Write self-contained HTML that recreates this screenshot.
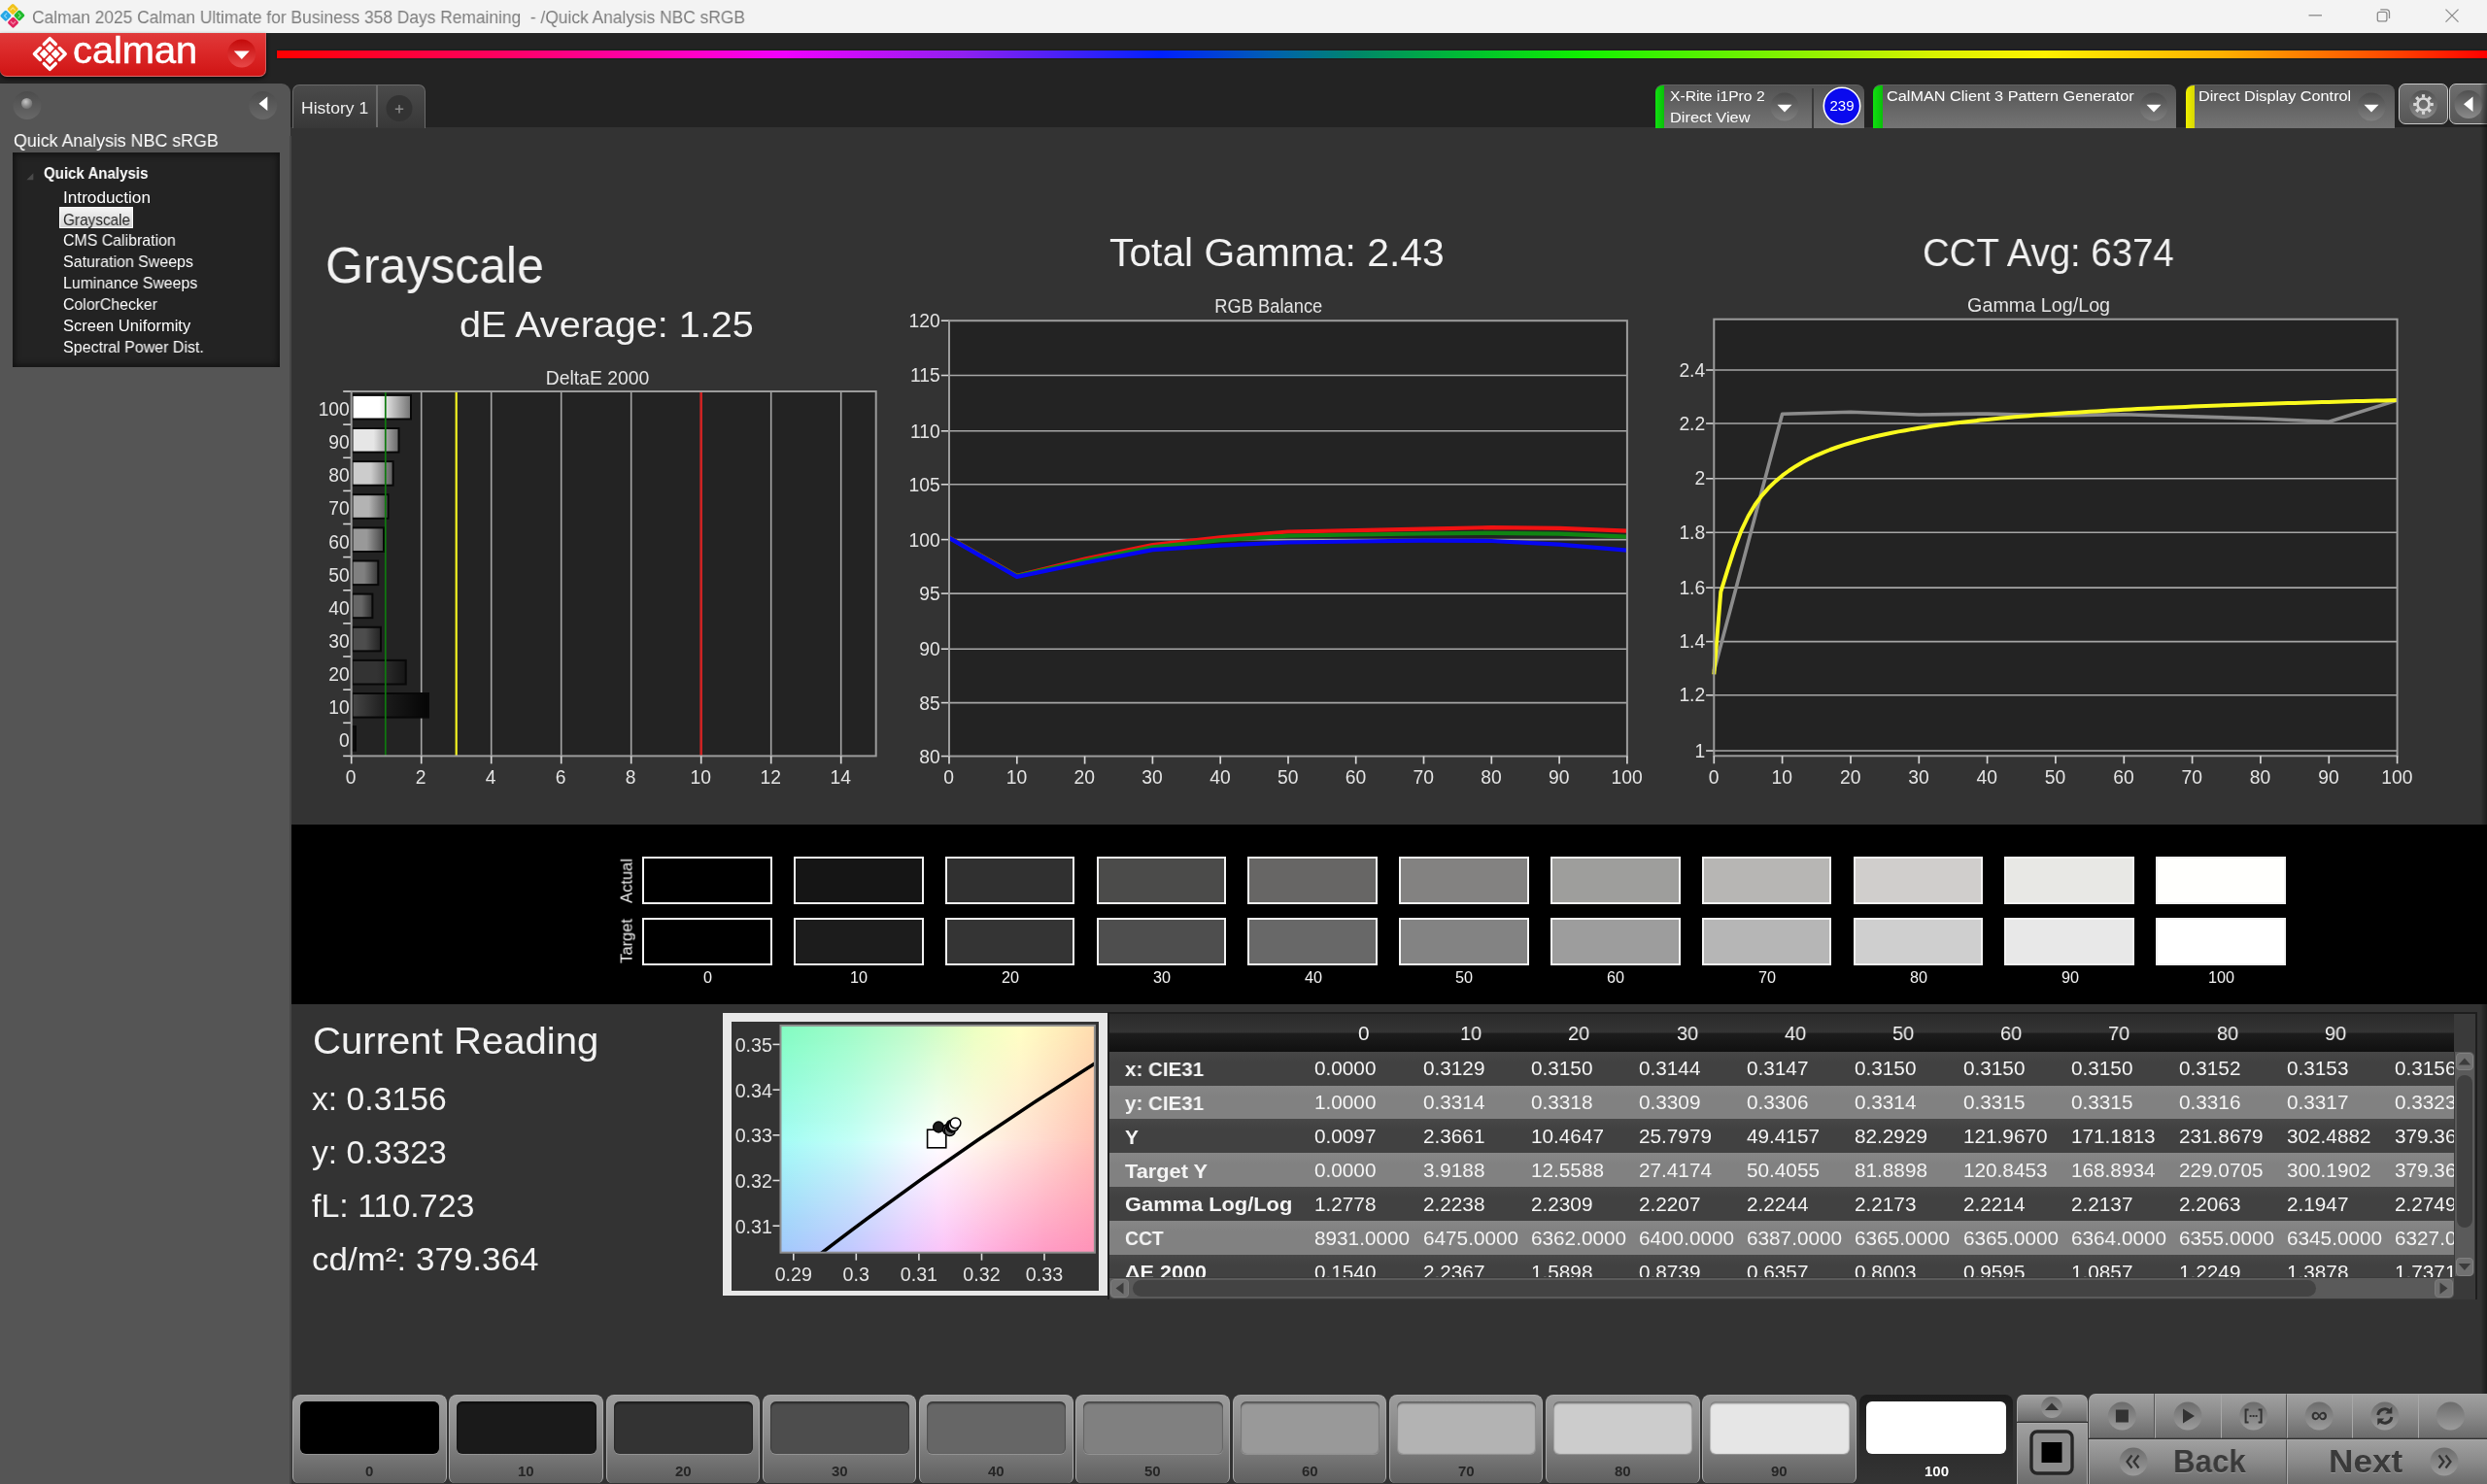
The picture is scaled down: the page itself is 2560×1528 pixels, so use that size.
<!DOCTYPE html>
<html><head><meta charset="utf-8"><title>Calman</title>
<style>
html,body{margin:0;padding:0;background:#232323;}
body{width:2560px;height:1528px;position:relative;overflow:hidden;font-family:"Liberation Sans",sans-serif;}
.t{position:absolute;white-space:nowrap;line-height:1;transform-origin:0 50%;will-change:transform;}
.b{position:absolute;box-sizing:border-box;}
svg{position:absolute;left:0;top:0;will-change:transform;}
svg text{font-family:"Liberation Sans",sans-serif;}
</style></head><body>
<div class="b" style="left:0.0px;top:0.0px;width:2560.0px;height:34.0px;background:#f3f3f3;"></div>
<div class="b" style="left:0.0px;top:34.0px;width:2560.0px;height:97.0px;background:#232323;"></div>
<div class="b" style="left:299.0px;top:131.0px;width:2261.0px;height:1397.0px;background:#333333;"></div>
<div class="b" style="left:285.0px;top:52.4px;width:2275.0px;height:8.0px;background:linear-gradient(90deg,#ff0000 0%,#ff0060 10%,#ff00c8 19%,#f000ff 23%,#9020f0 31%,#0020ff 40%,#0060b0 45%,#008868 49%,#00c030 54%,#10f000 59%,#80f000 68%,#d8f000 75%,#fff000 80%,#ffb000 88%,#ff5000 95%,#ff0000 100%);box-shadow:0 0 2px rgba(0,0,0,.6);"></div>
<svg width="34" height="34" viewBox="0 0 34 34"><g transform="translate(13.2,9.4)"><rect x="-4.3" y="-4.3" width="8.6" height="8.6" rx="1.7" transform="rotate(45)" fill="#f0c21a"/><path d="M-2.6 1.2 L0 -1.4 L2.6 1.2" fill="none" stroke="#fbe27a" stroke-width="1.1" transform="rotate(0)"/></g><g transform="translate(5.9,16.2)"><rect x="-4.3" y="-4.3" width="8.6" height="8.6" rx="1.7" transform="rotate(45)" fill="#27a8e6"/><path d="M-2.6 1.2 L0 -1.4 L2.6 1.2" fill="none" stroke="#8fd6f7" stroke-width="1.1" transform="rotate(-90)"/></g><g transform="translate(19.9,15.9)"><rect x="-4.3" y="-4.3" width="8.6" height="8.6" rx="1.7" transform="rotate(45)" fill="#1fb92c"/><path d="M-2.6 1.2 L0 -1.4 L2.6 1.2" fill="none" stroke="#86e38c" stroke-width="1.1" transform="rotate(90)"/></g><g transform="translate(13.5,23.2)"><rect x="-4.3" y="-4.3" width="8.6" height="8.6" rx="1.7" transform="rotate(45)" fill="#e0245e"/><path d="M-2.6 1.2 L0 -1.4 L2.6 1.2" fill="none" stroke="#f58aa8" stroke-width="1.1" transform="rotate(180)"/></g></svg>
<div class="t" style="left:33.2px;top:9.0px;font-size:18.0px;color:#7d7d7d;transform:scaleX(0.9654);">Calman 2025 Calman Ultimate for Business 358 Days Remaining&nbsp; - /Quick Analysis NBC sRGB</div>
<svg width="2560" height="34" viewBox="0 0 2560 34" style="left:0;top:0">
<g stroke="#8a8a8a" stroke-width="1.3" fill="none">
<line x1="2376.5" y1="15.8" x2="2390" y2="15.8"/>
<rect x="2447.3" y="12.3" width="9.6" height="9.6" rx="2"/>
<path d="M2450.3 9.8 h6 a3.2 3.2 0 0 1 3.2 3.2 v6"/>
<path d="M2517.5 9.6 l13 13 M2530.5 9.6 l-13 13"/>
</g></svg>
<div class="b" style="left:0.0px;top:34.0px;width:274.0px;height:45.0px;background:linear-gradient(#e03a3a 0%,#dc2a2a 40%,#d01414 100%);border-radius:0 0 7px 7px;border-bottom:1.5px solid #d86a6a;border-right:1px solid #d85c5c;box-shadow:0 2px 4px rgba(0,0,0,.7);"></div>
<svg width="274" height="45" viewBox="0 34 274 45" style="left:0;top:34px"><g transform="translate(51.3,55.5) rotate(45) scale(1.03)"><path d="M-10.9 -2.7 L-10.9 -10.9 L-2.7 -10.9" fill="none" stroke="#fff" stroke-width="3.4" stroke-linecap="round" stroke-linejoin="round"/><rect x="-7.35" y="-7.35" width="6.5" height="6.5" rx="0.8" fill="#fff"/><path d="M10.9 -2.7 L10.9 -10.9 L2.7 -10.9" fill="none" stroke="#fff" stroke-width="3.4" stroke-linecap="round" stroke-linejoin="round"/><rect x="0.85" y="-7.35" width="6.5" height="6.5" rx="0.8" fill="#fff"/><path d="M10.9 2.7 L10.9 10.9 L2.7 10.9" fill="none" stroke="#fff" stroke-width="3.4" stroke-linecap="round" stroke-linejoin="round"/><rect x="0.85" y="0.85" width="6.5" height="6.5" rx="0.8" fill="#fff"/><path d="M-10.9 2.7 L-10.9 10.9 L-2.7 10.9" fill="none" stroke="#fff" stroke-width="3.4" stroke-linecap="round" stroke-linejoin="round"/><rect x="-7.35" y="0.85" width="6.5" height="6.5" rx="0.8" fill="#fff"/></g><circle cx="248.8" cy="55" r="14.5" fill="url(#rg1)"/><path d="M240.8 52.5 h16 l-8 8.5z" fill="#fff"/><defs><linearGradient id="rg1" x1="0" y1="0" x2="0" y2="1"><stop offset="0" stop-color="#c40a0a"/><stop offset="1" stop-color="#e84848"/></linearGradient></defs></svg>
<div class="t" style="left:74.8px;top:33.2px;font-size:38.5px;color:#fff;transform:scaleX(1.0329);-webkit-text-stroke:0.5px #fff;">calman</div>
<div class="b" style="left:0.0px;top:86.3px;width:299.3px;height:1442.0px;background:#555555;border-radius:0 9px 0 0;"></div>
<svg width="300" height="50" viewBox="0 86 300 50" style="left:0;top:86px">
<defs><radialGradient id="led" cx="0.4" cy="0.35" r="0.7"><stop offset="0" stop-color="#c8c8c8"/><stop offset="0.6" stop-color="#8a8a8a"/><stop offset="1" stop-color="#6a6a6a"/></radialGradient>
<linearGradient id="dimp" x1="0" y1="0" x2="0" y2="1"><stop offset="0" stop-color="#4c4c4c"/><stop offset="1" stop-color="#686868"/></linearGradient></defs>
<circle cx="28" cy="108.5" r="14.5" fill="url(#dimp)"/>
<circle cx="27.6" cy="106.5" r="5.6" fill="url(#led)"/>
<circle cx="270.7" cy="108.5" r="14.5" fill="url(#dimp)"/>
<path d="M275.3 99.5 v14.5 l-8.8 -7.2z" fill="#fff"/>
</svg>
<div class="t" style="left:14.2px;top:135.6px;font-size:18.6px;color:#fff;transform:scaleX(0.9575);">Quick Analysis NBC sRGB</div>
<div class="b" style="left:13.0px;top:157.0px;width:274.5px;height:220.5px;background:#232323;box-shadow:inset 0 0 6px 2px #111;"></div>
<svg width="20" height="20" style="left:25px;top:172px"><path d="M9.3 6.2 v7 h-7z" fill="#4a4a4a"/></svg>
<div class="t" style="left:45.2px;top:170.9px;font-size:15.8px;color:#fff;font-weight:bold;transform:scaleX(0.9529);">Quick Analysis</div>
<div class="t" style="left:65.1px;top:195.1px;font-size:16.1px;color:#fff;transform:scaleX(1.0697);">Introduction</div>
<div class="b" style="left:61.2px;top:213.0px;width:76.2px;height:22.0px;background:linear-gradient(#f4f4f4,#d4d4d4);border:1px solid #fff;"></div>
<div class="t" style="left:65.1px;top:218.4px;font-size:16.1px;color:#222;transform:scaleX(0.9521);">Grayscale</div>
<div class="t" style="left:65.1px;top:239.2px;font-size:16.1px;color:#fff;transform:scaleX(0.9879);">CMS Calibration</div>
<div class="t" style="left:65.1px;top:261.2px;font-size:16.1px;color:#fff;transform:scaleX(0.9915);">Saturation Sweeps</div>
<div class="t" style="left:65.1px;top:283.3px;font-size:16.1px;color:#fff;transform:scaleX(0.9835);">Luminance Sweeps</div>
<div class="t" style="left:65.1px;top:305.3px;font-size:16.1px;color:#fff;transform:scaleX(0.9855);">ColorChecker</div>
<div class="t" style="left:65.1px;top:327.4px;font-size:16.1px;color:#fff;transform:scaleX(1.0254);">Screen Uniformity</div>
<div class="t" style="left:65.1px;top:349.4px;font-size:16.1px;color:#fff;transform:scaleX(0.9942);">Spectral Power Dist.</div>
<div class="b" style="left:300.6px;top:87.0px;width:137.0px;height:45.0px;background:linear-gradient(#4a4a4a,#383838);border:1.5px solid #6a6a6a;border-bottom:none;border-radius:7px 7px 0 0;"></div>
<div class="b" style="left:387.0px;top:88.0px;width:1.5px;height:43.0px;background:#6a6a6a;"></div>
<div class="t" style="left:309.6px;top:103.2px;font-size:17.4px;color:#f0f0f0;transform:scaleX(1.0080);">History 1</div>
<svg width="50" height="44" style="left:388px;top:87px"><circle cx="23" cy="24.5" r="13.5" fill="#333"/><path d="M18.8 25.3 h8.4 M23 21.1 v8.4" stroke="#8a8a8a" stroke-width="1.5"/></svg>
<div class="b" style="left:1704.2px;top:86.5px;width:214.5px;height:45.0px;background:linear-gradient(#525252,#686868 60%,#747474);border-radius:8px 8px 0 0;border-top:1px solid #626262;overflow:hidden;"><div style="position:absolute;left:0;top:-1px;width:9.3px;height:46px;background:linear-gradient(90deg,#10e010,#0ac00a)"></div></div>
<svg width="40" height="45" style="left:1817.0px;top:86.5px"><defs><linearGradient id="ag1704" x1="0" y1="0" x2="0" y2="1"><stop offset="0" stop-color="#4a4a4a"/><stop offset="1" stop-color="#808080"/></linearGradient></defs><circle cx="20" cy="23" r="14.5" fill="url(#ag1704)"/><path d="M12.5 20.8 h15 l-7.5 7.6z" fill="#fff"/></svg>
<div class="b" style="left:1865.0px;top:90.5px;width:1.6px;height:41.0px;background:#3a3a3a;"></div>
<div class="t" style="left:1718.5px;top:90.9px;font-size:15.4px;color:#fff;transform:scaleX(1.0192);">X-Rite i1Pro 2</div>
<div class="t" style="left:1719.2px;top:112.9px;font-size:15.4px;color:#fff;transform:scaleX(1.0632);">Direct View</div>
<svg width="44" height="44" style="left:1874.3px;top:87px"><circle cx="22" cy="22" r="18.7" fill="#0a0aee" stroke="#fff" stroke-width="1.6"/><text x="22" y="27.3" font-size="15" fill="#fff" text-anchor="middle">239</text></svg>
<div class="b" style="left:1928.4px;top:86.5px;width:312.0px;height:45.0px;background:linear-gradient(#525252,#686868 60%,#747474);border-radius:8px 8px 0 0;border-top:1px solid #626262;overflow:hidden;"><div style="position:absolute;left:0;top:-1px;width:9.3px;height:46px;background:linear-gradient(90deg,#10e010,#0ac00a)"></div></div>
<svg width="40" height="45" style="left:2196.5px;top:86.5px"><defs><linearGradient id="ag1928" x1="0" y1="0" x2="0" y2="1"><stop offset="0" stop-color="#4a4a4a"/><stop offset="1" stop-color="#808080"/></linearGradient></defs><circle cx="20" cy="23" r="14.5" fill="url(#ag1928)"/><path d="M12.5 20.8 h15 l-7.5 7.6z" fill="#fff"/></svg>
<div class="t" style="left:1942.1px;top:90.9px;font-size:15.4px;color:#fff;transform:scaleX(1.0560);">CalMAN Client 3 Pattern Generator</div>
<div class="b" style="left:2249.6px;top:86.5px;width:215.3px;height:45.0px;background:linear-gradient(#525252,#686868 60%,#747474);border-radius:8px 8px 0 0;border-top:1px solid #626262;overflow:hidden;"><div style="position:absolute;left:0;top:-1px;width:9.3px;height:46px;background:linear-gradient(90deg,#f0f000,#d8d800)"></div></div>
<svg width="40" height="45" style="left:2420.5px;top:86.5px"><defs><linearGradient id="ag2249" x1="0" y1="0" x2="0" y2="1"><stop offset="0" stop-color="#4a4a4a"/><stop offset="1" stop-color="#808080"/></linearGradient></defs><circle cx="20" cy="23" r="14.5" fill="url(#ag2249)"/><path d="M12.5 20.8 h15 l-7.5 7.6z" fill="#fff"/></svg>
<div class="t" style="left:2263.4px;top:90.9px;font-size:15.4px;color:#fff;transform:scaleX(1.0563);">Direct Display Control</div>
<div class="b" style="left:2468.9px;top:86.2px;width:51.5px;height:42.3px;background:linear-gradient(#6e6e6e,#565656);border:1.5px solid #c8c8c8;border-radius:7px;"></div>
<div class="b" style="left:2521.0px;top:86.2px;width:60.0px;height:42.3px;background:linear-gradient(#6e6e6e,#565656);border:1.5px solid #c8c8c8;border-radius:7px;"></div>
<svg width="100" height="44" style="left:2468px;top:86px"><defs><linearGradient id="gg" x1="0" y1="0" x2="0" y2="1"><stop offset="0" stop-color="#505050"/><stop offset="1" stop-color="#8a8a8a"/></linearGradient></defs><circle cx="26.5" cy="21.5" r="14.5" fill="url(#gg)"/><circle cx="73" cy="21.5" r="14.5" fill="url(#gg)"/><g transform="translate(26.5,21.5)" fill="none" stroke="#d8d8d8"><circle r="6" stroke-width="2.6"/><line x1="0" y1="-7" x2="0" y2="-10.3" stroke-width="3.2" transform="rotate(0)"/><line x1="0" y1="-7" x2="0" y2="-10.3" stroke-width="3.2" transform="rotate(45)"/><line x1="0" y1="-7" x2="0" y2="-10.3" stroke-width="3.2" transform="rotate(90)"/><line x1="0" y1="-7" x2="0" y2="-10.3" stroke-width="3.2" transform="rotate(135)"/><line x1="0" y1="-7" x2="0" y2="-10.3" stroke-width="3.2" transform="rotate(180)"/><line x1="0" y1="-7" x2="0" y2="-10.3" stroke-width="3.2" transform="rotate(225)"/><line x1="0" y1="-7" x2="0" y2="-10.3" stroke-width="3.2" transform="rotate(270)"/><line x1="0" y1="-7" x2="0" y2="-10.3" stroke-width="3.2" transform="rotate(315)"/></g><path d="M77.5 13.5 v15.5 l-9.5 -7.7z" fill="#fff"/></svg>
<div class="b" style="left:2553.0px;top:86.0px;width:7.0px;height:1350.0px;background:linear-gradient(90deg,rgba(0,0,0,0),rgba(0,0,0,.45));"></div>
<div class="t" style="left:334.5px;top:247.4px;font-size:52.0px;color:#f2f2f2;transform:scaleX(0.9604);">Grayscale</div>
<div class="t" style="left:472.5px;top:315.6px;font-size:37.6px;color:#f2f2f2;transform:scaleX(1.0528);">dE Average: 1.25</div>
<div class="t" style="left:1141.9px;top:240.2px;font-size:40.8px;color:#f2f2f2;">Total Gamma: 2.43</div>
<div class="t" style="left:1978.7px;top:240.1px;font-size:41.0px;color:#f2f2f2;transform:scaleX(0.9354);">CCT Avg: 6374</div>
<svg width="2560" height="840" viewBox="0 0 2560 840"><defs><linearGradient id="bg0" x1="0" y1="0" x2="1" y2="0"><stop offset="0" stop-color="rgb(30,30,30)"/><stop offset="0.46" stop-color="rgb(14,14,14)"/><stop offset="1" stop-color="rgb(5,5,5)"/></linearGradient><linearGradient id="bg1" x1="0" y1="0" x2="1" y2="0"><stop offset="0" stop-color="rgb(70,70,70)"/><stop offset="0.46" stop-color="rgb(26,26,26)"/><stop offset="1" stop-color="rgb(5,5,5)"/></linearGradient><linearGradient id="bg2" x1="0" y1="0" x2="1" y2="0"><stop offset="0" stop-color="rgb(51,51,51)"/><stop offset="0.46" stop-color="rgb(51,51,51)"/><stop offset="1" stop-color="rgb(22,22,22)"/></linearGradient><linearGradient id="bg3" x1="0" y1="0" x2="1" y2="0"><stop offset="0" stop-color="rgb(77,77,77)"/><stop offset="0.46" stop-color="rgb(77,77,77)"/><stop offset="1" stop-color="rgb(34,34,34)"/></linearGradient><linearGradient id="bg4" x1="0" y1="0" x2="1" y2="0"><stop offset="0" stop-color="rgb(102,102,102)"/><stop offset="0.46" stop-color="rgb(102,102,102)"/><stop offset="1" stop-color="rgb(45,45,45)"/></linearGradient><linearGradient id="bg5" x1="0" y1="0" x2="1" y2="0"><stop offset="0" stop-color="rgb(128,128,128)"/><stop offset="0.46" stop-color="rgb(128,128,128)"/><stop offset="1" stop-color="rgb(57,57,57)"/></linearGradient><linearGradient id="bg6" x1="0" y1="0" x2="1" y2="0"><stop offset="0" stop-color="rgb(153,153,153)"/><stop offset="0.46" stop-color="rgb(153,153,153)"/><stop offset="1" stop-color="rgb(68,68,68)"/></linearGradient><linearGradient id="bg7" x1="0" y1="0" x2="1" y2="0"><stop offset="0" stop-color="rgb(179,179,179)"/><stop offset="0.46" stop-color="rgb(179,179,179)"/><stop offset="1" stop-color="rgb(80,80,80)"/></linearGradient><linearGradient id="bg8" x1="0" y1="0" x2="1" y2="0"><stop offset="0" stop-color="rgb(204,204,204)"/><stop offset="0.46" stop-color="rgb(204,204,204)"/><stop offset="1" stop-color="rgb(91,91,91)"/></linearGradient><linearGradient id="bg9" x1="0" y1="0" x2="1" y2="0"><stop offset="0" stop-color="rgb(230,230,230)"/><stop offset="0.46" stop-color="rgb(230,230,230)"/><stop offset="1" stop-color="rgb(103,103,103)"/></linearGradient><linearGradient id="bg10" x1="0" y1="0" x2="1" y2="0"><stop offset="0" stop-color="rgb(255,255,255)"/><stop offset="0.46" stop-color="rgb(255,255,255)"/><stop offset="1" stop-color="rgb(114,114,114)"/></linearGradient></defs><rect x="361.7" y="403.0" width="540.0" height="375.4" fill="#232323"/><line x1="433.7" y1="403.0" x2="433.7" y2="778.4" stroke="#a6a6a6" stroke-width="1.6"/><line x1="505.7" y1="403.0" x2="505.7" y2="778.4" stroke="#a6a6a6" stroke-width="1.6"/><line x1="577.7" y1="403.0" x2="577.7" y2="778.4" stroke="#a6a6a6" stroke-width="1.6"/><line x1="649.7" y1="403.0" x2="649.7" y2="778.4" stroke="#a6a6a6" stroke-width="1.6"/><line x1="721.7" y1="403.0" x2="721.7" y2="778.4" stroke="#a6a6a6" stroke-width="1.6"/><line x1="793.7" y1="403.0" x2="793.7" y2="778.4" stroke="#a6a6a6" stroke-width="1.6"/><line x1="865.7" y1="403.0" x2="865.7" y2="778.4" stroke="#a6a6a6" stroke-width="1.6"/><rect x="362.5" y="748.1" width="3.5" height="24.6" fill="url(#bg0)" stroke="#080808" stroke-width="2"/><text x="359.8" y="769.3" font-size="19.3" fill="#e4e4e4" text-anchor="end" >0</text><rect x="362.5" y="714.0" width="78.5" height="24.6" fill="url(#bg1)" stroke="#080808" stroke-width="2"/><text x="359.8" y="735.2" font-size="19.3" fill="#e4e4e4" text-anchor="end" >10</text><rect x="362.5" y="679.9" width="55.2" height="24.6" fill="url(#bg2)" stroke="#080808" stroke-width="2"/><text x="359.8" y="701.1" font-size="19.3" fill="#e4e4e4" text-anchor="end" >20</text><rect x="362.5" y="645.8" width="29.5" height="24.6" fill="url(#bg3)" stroke="#080808" stroke-width="2"/><text x="359.8" y="667.0" font-size="19.3" fill="#e4e4e4" text-anchor="end" >30</text><rect x="362.5" y="611.6" width="20.9" height="24.6" fill="url(#bg4)" stroke="#080808" stroke-width="2"/><text x="359.8" y="632.8" font-size="19.3" fill="#e4e4e4" text-anchor="end" >40</text><rect x="362.5" y="577.5" width="26.8" height="24.6" fill="url(#bg5)" stroke="#080808" stroke-width="2"/><text x="359.8" y="598.7" font-size="19.3" fill="#e4e4e4" text-anchor="end" >50</text><rect x="362.5" y="543.4" width="32.5" height="24.6" fill="url(#bg6)" stroke="#080808" stroke-width="2"/><text x="359.8" y="564.6" font-size="19.3" fill="#e4e4e4" text-anchor="end" >60</text><rect x="362.5" y="509.2" width="37.1" height="24.6" fill="url(#bg7)" stroke="#080808" stroke-width="2"/><text x="359.8" y="530.4" font-size="19.3" fill="#e4e4e4" text-anchor="end" >70</text><rect x="362.5" y="475.1" width="42.1" height="24.6" fill="url(#bg8)" stroke="#080808" stroke-width="2"/><text x="359.8" y="496.3" font-size="19.3" fill="#e4e4e4" text-anchor="end" >80</text><rect x="362.5" y="441.0" width="48.0" height="24.6" fill="url(#bg9)" stroke="#080808" stroke-width="2"/><text x="359.8" y="462.2" font-size="19.3" fill="#e4e4e4" text-anchor="end" >90</text><rect x="362.5" y="406.9" width="60.5" height="24.6" fill="url(#bg10)" stroke="#080808" stroke-width="2"/><text x="359.8" y="428.1" font-size="19.3" fill="#e4e4e4" text-anchor="end" >100</text><line x1="353.2" y1="403.0" x2="361.7" y2="403.0" stroke="#d6d6d6" stroke-width="1.6"/><line x1="353.2" y1="437.1" x2="361.7" y2="437.1" stroke="#d6d6d6" stroke-width="1.6"/><line x1="353.2" y1="471.3" x2="361.7" y2="471.3" stroke="#d6d6d6" stroke-width="1.6"/><line x1="353.2" y1="505.4" x2="361.7" y2="505.4" stroke="#d6d6d6" stroke-width="1.6"/><line x1="353.2" y1="539.5" x2="361.7" y2="539.5" stroke="#d6d6d6" stroke-width="1.6"/><line x1="353.2" y1="573.6" x2="361.7" y2="573.6" stroke="#d6d6d6" stroke-width="1.6"/><line x1="353.2" y1="607.8" x2="361.7" y2="607.8" stroke="#d6d6d6" stroke-width="1.6"/><line x1="353.2" y1="641.9" x2="361.7" y2="641.9" stroke="#d6d6d6" stroke-width="1.6"/><line x1="353.2" y1="676.0" x2="361.7" y2="676.0" stroke="#d6d6d6" stroke-width="1.6"/><line x1="353.2" y1="710.1" x2="361.7" y2="710.1" stroke="#d6d6d6" stroke-width="1.6"/><line x1="353.2" y1="744.3" x2="361.7" y2="744.3" stroke="#d6d6d6" stroke-width="1.6"/><line x1="353.2" y1="778.4" x2="361.7" y2="778.4" stroke="#d6d6d6" stroke-width="1.6"/><line x1="396.8" y1="403.0" x2="396.8" y2="778.4" stroke="#0e7a0e" stroke-width="1.7"/><line x1="469.7" y1="403.0" x2="469.7" y2="778.4" stroke="#f4f420" stroke-width="2.2"/><line x1="721.7" y1="403.0" x2="721.7" y2="778.4" stroke="#cc2222" stroke-width="2.6"/><rect x="361.7" y="403.0" width="540.0" height="375.4" fill="none" stroke="#9c9c9c" stroke-width="2"/><line x1="361.7" y1="778.4" x2="361.7" y2="786.4" stroke="#d6d6d6" stroke-width="1.7"/><text x="361.2" y="806.6" font-size="19.3" fill="#e4e4e4" text-anchor="middle" >0</text><line x1="433.7" y1="778.4" x2="433.7" y2="786.4" stroke="#d6d6d6" stroke-width="1.7"/><text x="433.2" y="806.6" font-size="19.3" fill="#e4e4e4" text-anchor="middle" >2</text><line x1="505.7" y1="778.4" x2="505.7" y2="786.4" stroke="#d6d6d6" stroke-width="1.7"/><text x="505.2" y="806.6" font-size="19.3" fill="#e4e4e4" text-anchor="middle" >4</text><line x1="577.7" y1="778.4" x2="577.7" y2="786.4" stroke="#d6d6d6" stroke-width="1.7"/><text x="577.2" y="806.6" font-size="19.3" fill="#e4e4e4" text-anchor="middle" >6</text><line x1="649.7" y1="778.4" x2="649.7" y2="786.4" stroke="#d6d6d6" stroke-width="1.7"/><text x="649.2" y="806.6" font-size="19.3" fill="#e4e4e4" text-anchor="middle" >8</text><line x1="721.7" y1="778.4" x2="721.7" y2="786.4" stroke="#d6d6d6" stroke-width="1.7"/><text x="721.2" y="806.6" font-size="19.3" fill="#e4e4e4" text-anchor="middle" >10</text><line x1="793.7" y1="778.4" x2="793.7" y2="786.4" stroke="#d6d6d6" stroke-width="1.7"/><text x="793.2" y="806.6" font-size="19.3" fill="#e4e4e4" text-anchor="middle" >12</text><line x1="865.7" y1="778.4" x2="865.7" y2="786.4" stroke="#d6d6d6" stroke-width="1.7"/><text x="865.2" y="806.6" font-size="19.3" fill="#e4e4e4" text-anchor="middle" >14</text><text x="615.1" y="395.6" font-size="19.3" fill="#e4e4e4" text-anchor="middle" textLength="106.6" lengthAdjust="spacingAndGlyphs">DeltaE 2000</text><rect x="977.0" y="330.2" width="697.9000000000001" height="448.40000000000003" fill="#232323"/><line x1="968.8" y1="778.6" x2="977.0" y2="778.6" stroke="#d6d6d6" stroke-width="1.6"/><text x="967.7" y="785.5" font-size="19.3" fill="#e4e4e4" text-anchor="end" >80</text><line x1="977.0" y1="723.6" x2="1674.9" y2="723.6" stroke="#a6a6a6" stroke-width="1.6"/><line x1="968.8" y1="723.6" x2="977.0" y2="723.6" stroke="#d6d6d6" stroke-width="1.6"/><text x="967.7" y="730.5" font-size="19.3" fill="#e4e4e4" text-anchor="end" >85</text><line x1="977.0" y1="668.2" x2="1674.9" y2="668.2" stroke="#a6a6a6" stroke-width="1.6"/><line x1="968.8" y1="668.2" x2="977.0" y2="668.2" stroke="#d6d6d6" stroke-width="1.6"/><text x="967.7" y="675.1" font-size="19.3" fill="#e4e4e4" text-anchor="end" >90</text><line x1="977.0" y1="611.1" x2="1674.9" y2="611.1" stroke="#a6a6a6" stroke-width="1.6"/><line x1="968.8" y1="611.1" x2="977.0" y2="611.1" stroke="#d6d6d6" stroke-width="1.6"/><text x="967.7" y="618.0" font-size="19.3" fill="#e4e4e4" text-anchor="end" >95</text><line x1="977.0" y1="555.6" x2="1674.9" y2="555.6" stroke="#a6a6a6" stroke-width="1.6"/><line x1="968.8" y1="555.6" x2="977.0" y2="555.6" stroke="#d6d6d6" stroke-width="1.6"/><text x="967.7" y="562.5" font-size="19.3" fill="#e4e4e4" text-anchor="end" >100</text><line x1="977.0" y1="498.8" x2="1674.9" y2="498.8" stroke="#a6a6a6" stroke-width="1.6"/><line x1="968.8" y1="498.8" x2="977.0" y2="498.8" stroke="#d6d6d6" stroke-width="1.6"/><text x="967.7" y="505.7" font-size="19.3" fill="#e4e4e4" text-anchor="end" >105</text><line x1="977.0" y1="443.8" x2="1674.9" y2="443.8" stroke="#a6a6a6" stroke-width="1.6"/><line x1="968.8" y1="443.8" x2="977.0" y2="443.8" stroke="#d6d6d6" stroke-width="1.6"/><text x="967.7" y="450.7" font-size="19.3" fill="#e4e4e4" text-anchor="end" >110</text><line x1="977.0" y1="386.5" x2="1674.9" y2="386.5" stroke="#a6a6a6" stroke-width="1.6"/><line x1="968.8" y1="386.5" x2="977.0" y2="386.5" stroke="#d6d6d6" stroke-width="1.6"/><text x="967.7" y="393.4" font-size="19.3" fill="#e4e4e4" text-anchor="end" >115</text><line x1="968.8" y1="330.2" x2="977.0" y2="330.2" stroke="#d6d6d6" stroke-width="1.6"/><text x="967.7" y="337.1" font-size="19.3" fill="#e4e4e4" text-anchor="end" >120</text><polyline points="977.0,553.3 1046.8,592.8 1116.6,575.6 1186.4,561.1 1256.2,553.3 1326.0,547.5 1395.7,546.1 1465.5,544.6 1535.3,543.1 1605.1,543.9 1674.9,546.7" fill="none" stroke="#f01212" stroke-width="4.2" stroke-linejoin="round"/><polyline points="977.0,553.6 1046.8,593.1 1116.6,577.2 1186.4,563.4 1256.2,556.2 1326.0,551.6 1395.7,550.5 1465.5,549.5 1535.3,548.8 1605.1,549.7 1674.9,552.6" fill="none" stroke="#108412" stroke-width="4.2" stroke-linejoin="round"/><polyline points="977.0,553.9 1046.8,593.9 1116.6,579.5 1186.4,566.1 1256.2,561.7 1326.0,558.5 1395.7,557.5 1465.5,556.7 1535.3,557.0 1605.1,560.6 1674.9,566.7" fill="none" stroke="#0606f2" stroke-width="4.2" stroke-linejoin="round"/><rect x="977.0" y="330.2" width="697.9000000000001" height="448.40000000000003" fill="none" stroke="#9c9c9c" stroke-width="2"/><line x1="977.0" y1="778.6" x2="977.0" y2="786.6" stroke="#d6d6d6" stroke-width="1.7"/><text x="976.7" y="807.0" font-size="19.3" fill="#e4e4e4" text-anchor="middle" >0</text><line x1="1046.8" y1="778.6" x2="1046.8" y2="786.6" stroke="#d6d6d6" stroke-width="1.7"/><text x="1046.5" y="807.0" font-size="19.3" fill="#e4e4e4" text-anchor="middle" >10</text><line x1="1116.6" y1="778.6" x2="1116.6" y2="786.6" stroke="#d6d6d6" stroke-width="1.7"/><text x="1116.3" y="807.0" font-size="19.3" fill="#e4e4e4" text-anchor="middle" >20</text><line x1="1186.4" y1="778.6" x2="1186.4" y2="786.6" stroke="#d6d6d6" stroke-width="1.7"/><text x="1186.1" y="807.0" font-size="19.3" fill="#e4e4e4" text-anchor="middle" >30</text><line x1="1256.2" y1="778.6" x2="1256.2" y2="786.6" stroke="#d6d6d6" stroke-width="1.7"/><text x="1255.9" y="807.0" font-size="19.3" fill="#e4e4e4" text-anchor="middle" >40</text><line x1="1326.0" y1="778.6" x2="1326.0" y2="786.6" stroke="#d6d6d6" stroke-width="1.7"/><text x="1325.7" y="807.0" font-size="19.3" fill="#e4e4e4" text-anchor="middle" >50</text><line x1="1395.7" y1="778.6" x2="1395.7" y2="786.6" stroke="#d6d6d6" stroke-width="1.7"/><text x="1395.4" y="807.0" font-size="19.3" fill="#e4e4e4" text-anchor="middle" >60</text><line x1="1465.5" y1="778.6" x2="1465.5" y2="786.6" stroke="#d6d6d6" stroke-width="1.7"/><text x="1465.2" y="807.0" font-size="19.3" fill="#e4e4e4" text-anchor="middle" >70</text><line x1="1535.3" y1="778.6" x2="1535.3" y2="786.6" stroke="#d6d6d6" stroke-width="1.7"/><text x="1535.0" y="807.0" font-size="19.3" fill="#e4e4e4" text-anchor="middle" >80</text><line x1="1605.1" y1="778.6" x2="1605.1" y2="786.6" stroke="#d6d6d6" stroke-width="1.7"/><text x="1604.8" y="807.0" font-size="19.3" fill="#e4e4e4" text-anchor="middle" >90</text><line x1="1674.9" y1="778.6" x2="1674.9" y2="786.6" stroke="#d6d6d6" stroke-width="1.7"/><text x="1674.6" y="807.0" font-size="19.3" fill="#e4e4e4" text-anchor="middle" >100</text><text x="1305.8" y="321.9" font-size="19.3" fill="#e4e4e4" text-anchor="middle" textLength="111" lengthAdjust="spacingAndGlyphs">RGB Balance</text><rect x="1764.3" y="328.7" width="703.3" height="449.59999999999997" fill="#232323"/><line x1="1764.3" y1="773.0" x2="2467.6" y2="773.0" stroke="#a6a6a6" stroke-width="1.6"/><line x1="1756.1" y1="773.0" x2="1764.3" y2="773.0" stroke="#d6d6d6" stroke-width="1.6"/><text x="1755.2" y="779.6" font-size="19.3" fill="#e4e4e4" text-anchor="end" >1</text><line x1="1764.3" y1="715.8" x2="2467.6" y2="715.8" stroke="#a6a6a6" stroke-width="1.6"/><line x1="1756.1" y1="715.8" x2="1764.3" y2="715.8" stroke="#d6d6d6" stroke-width="1.6"/><text x="1755.2" y="722.4" font-size="19.3" fill="#e4e4e4" text-anchor="end" >1.2</text><line x1="1764.3" y1="660.6" x2="2467.6" y2="660.6" stroke="#a6a6a6" stroke-width="1.6"/><line x1="1756.1" y1="660.6" x2="1764.3" y2="660.6" stroke="#d6d6d6" stroke-width="1.6"/><text x="1755.2" y="667.2" font-size="19.3" fill="#e4e4e4" text-anchor="end" >1.4</text><line x1="1764.3" y1="605.1" x2="2467.6" y2="605.1" stroke="#a6a6a6" stroke-width="1.6"/><line x1="1756.1" y1="605.1" x2="1764.3" y2="605.1" stroke="#d6d6d6" stroke-width="1.6"/><text x="1755.2" y="611.7" font-size="19.3" fill="#e4e4e4" text-anchor="end" >1.6</text><line x1="1764.3" y1="548.3" x2="2467.6" y2="548.3" stroke="#a6a6a6" stroke-width="1.6"/><line x1="1756.1" y1="548.3" x2="1764.3" y2="548.3" stroke="#d6d6d6" stroke-width="1.6"/><text x="1755.2" y="554.9" font-size="19.3" fill="#e4e4e4" text-anchor="end" >1.8</text><line x1="1764.3" y1="492.8" x2="2467.6" y2="492.8" stroke="#a6a6a6" stroke-width="1.6"/><line x1="1756.1" y1="492.8" x2="1764.3" y2="492.8" stroke="#d6d6d6" stroke-width="1.6"/><text x="1755.2" y="499.4" font-size="19.3" fill="#e4e4e4" text-anchor="end" >2</text><line x1="1764.3" y1="436.0" x2="2467.6" y2="436.0" stroke="#a6a6a6" stroke-width="1.6"/><line x1="1756.1" y1="436.0" x2="1764.3" y2="436.0" stroke="#d6d6d6" stroke-width="1.6"/><text x="1755.2" y="442.6" font-size="19.3" fill="#e4e4e4" text-anchor="end" >2.2</text><line x1="1764.3" y1="381.0" x2="2467.6" y2="381.0" stroke="#a6a6a6" stroke-width="1.6"/><line x1="1756.1" y1="381.0" x2="1764.3" y2="381.0" stroke="#d6d6d6" stroke-width="1.6"/><text x="1755.2" y="387.6" font-size="19.3" fill="#e4e4e4" text-anchor="end" >2.4</text><polyline points="1764.3,691.0 1834.6,426.2 1905.0,424.2 1975.3,427.0 2045.6,426.0 2115.9,427.9 2186.3,426.8 2256.6,428.9 2326.9,431.0 2397.3,434.2 2467.6,412.1" fill="none" stroke="#8c8c8c" stroke-width="3.6" stroke-linejoin="round"/><polyline points="1764.3,694.3 1771.3,609.3 1778.4,586.3 1785.4,564.9 1792.4,546.4 1799.5,531.5 1806.5,519.8 1813.5,510.3 1820.6,502.3 1827.6,495.6 1834.6,489.7 1841.7,484.5 1848.7,479.9 1855.7,475.8 1862.8,472.1 1869.8,468.8 1876.8,465.8 1883.9,463.0 1890.9,460.5 1897.9,458.2 1905.0,456.0 1912.0,454.0 1919.0,452.1 1926.1,450.4 1933.1,448.8 1940.1,447.2 1947.2,445.8 1954.2,444.4 1961.2,443.2 1968.3,441.9 1975.3,440.8 1982.3,439.7 1989.4,438.6 1996.4,437.6 2003.4,436.7 2010.5,435.8 2017.5,435.0 2024.5,434.2 2031.6,433.4 2038.6,432.6 2045.6,431.9 2052.7,431.2 2059.7,430.6 2066.7,430.0 2073.8,429.3 2080.8,428.8 2087.8,428.2 2094.9,427.6 2101.9,427.1 2108.9,426.6 2115.9,426.1 2123.0,425.6 2130.0,425.1 2137.0,424.7 2144.1,424.2 2151.1,423.8 2158.1,423.4 2165.2,423.0 2172.2,422.6 2179.2,422.2 2186.3,421.8 2193.3,421.5 2200.3,421.1 2207.4,420.8 2214.4,420.4 2221.4,420.1 2228.5,419.8 2235.5,419.5 2242.5,419.2 2249.6,418.9 2256.6,418.6 2263.6,418.3 2270.7,418.0 2277.7,417.8 2284.7,417.5 2291.8,417.2 2298.8,417.0 2305.8,416.7 2312.9,416.5 2319.9,416.2 2326.9,416.0 2334.0,415.8 2341.0,415.5 2348.0,415.3 2355.1,415.1 2362.1,414.9 2369.1,414.7 2376.2,414.5 2383.2,414.3 2390.2,414.1 2397.3,413.9 2404.3,413.7 2411.3,413.5 2418.4,413.3 2425.4,413.1 2432.4,413.0 2439.5,412.8 2446.5,412.6 2453.5,412.4 2460.6,412.3 2467.6,412.1" fill="none" stroke="#fafa1e" stroke-width="4" stroke-linejoin="round"/><rect x="1764.3" y="328.7" width="703.3" height="449.59999999999997" fill="none" stroke="#9c9c9c" stroke-width="2"/><line x1="1764.3" y1="778.3" x2="1764.3" y2="786.3" stroke="#d6d6d6" stroke-width="1.7"/><text x="1764.0" y="807.0" font-size="19.3" fill="#e4e4e4" text-anchor="middle" >0</text><line x1="1834.6" y1="778.3" x2="1834.6" y2="786.3" stroke="#d6d6d6" stroke-width="1.7"/><text x="1834.3" y="807.0" font-size="19.3" fill="#e4e4e4" text-anchor="middle" >10</text><line x1="1905.0" y1="778.3" x2="1905.0" y2="786.3" stroke="#d6d6d6" stroke-width="1.7"/><text x="1904.7" y="807.0" font-size="19.3" fill="#e4e4e4" text-anchor="middle" >20</text><line x1="1975.3" y1="778.3" x2="1975.3" y2="786.3" stroke="#d6d6d6" stroke-width="1.7"/><text x="1975.0" y="807.0" font-size="19.3" fill="#e4e4e4" text-anchor="middle" >30</text><line x1="2045.6" y1="778.3" x2="2045.6" y2="786.3" stroke="#d6d6d6" stroke-width="1.7"/><text x="2045.3" y="807.0" font-size="19.3" fill="#e4e4e4" text-anchor="middle" >40</text><line x1="2115.9" y1="778.3" x2="2115.9" y2="786.3" stroke="#d6d6d6" stroke-width="1.7"/><text x="2115.6" y="807.0" font-size="19.3" fill="#e4e4e4" text-anchor="middle" >50</text><line x1="2186.3" y1="778.3" x2="2186.3" y2="786.3" stroke="#d6d6d6" stroke-width="1.7"/><text x="2186.0" y="807.0" font-size="19.3" fill="#e4e4e4" text-anchor="middle" >60</text><line x1="2256.6" y1="778.3" x2="2256.6" y2="786.3" stroke="#d6d6d6" stroke-width="1.7"/><text x="2256.3" y="807.0" font-size="19.3" fill="#e4e4e4" text-anchor="middle" >70</text><line x1="2326.9" y1="778.3" x2="2326.9" y2="786.3" stroke="#d6d6d6" stroke-width="1.7"/><text x="2326.6" y="807.0" font-size="19.3" fill="#e4e4e4" text-anchor="middle" >80</text><line x1="2397.3" y1="778.3" x2="2397.3" y2="786.3" stroke="#d6d6d6" stroke-width="1.7"/><text x="2397.0" y="807.0" font-size="19.3" fill="#e4e4e4" text-anchor="middle" >90</text><line x1="2467.6" y1="778.3" x2="2467.6" y2="786.3" stroke="#d6d6d6" stroke-width="1.7"/><text x="2467.3" y="807.0" font-size="19.3" fill="#e4e4e4" text-anchor="middle" >100</text><text x="2098.6" y="321.3" font-size="19.3" fill="#e4e4e4" text-anchor="middle" textLength="147" lengthAdjust="spacingAndGlyphs">Gamma Log/Log</text></svg>
<div class="b" style="left:299.0px;top:848.5px;width:2261.0px;height:185.0px;background:#000;"></div>
<div class="b" style="left:661.2px;top:882.2px;width:133.6px;height:49.0px;background:#000000;border:2px solid #f4f4f4;"></div>
<div class="b" style="left:661.2px;top:944.8px;width:133.6px;height:48.8px;background:#000000;border:2px solid #f4f4f4;"></div>
<div class="t" style="left:723.9px;top:998.2px;font-size:16.2px;color:#f4f4f4;">0</div>
<div class="b" style="left:817.0px;top:882.2px;width:133.6px;height:49.0px;background:#151515;border:2px solid #f4f4f4;"></div>
<div class="b" style="left:817.0px;top:944.8px;width:133.6px;height:48.8px;background:#1c1c1c;border:2px solid #f4f4f4;"></div>
<div class="t" style="left:875.2px;top:998.2px;font-size:16.2px;color:#f4f4f4;">10</div>
<div class="b" style="left:972.8px;top:882.2px;width:133.6px;height:49.0px;background:#303030;border:2px solid #f4f4f4;"></div>
<div class="b" style="left:972.8px;top:944.8px;width:133.6px;height:48.8px;background:#343434;border:2px solid #f4f4f4;"></div>
<div class="t" style="left:1031.0px;top:998.2px;font-size:16.2px;color:#f4f4f4;">20</div>
<div class="b" style="left:1128.6px;top:882.2px;width:133.6px;height:49.0px;background:#4b4b4a;border:2px solid #f4f4f4;"></div>
<div class="b" style="left:1128.6px;top:944.8px;width:133.6px;height:48.8px;background:#4e4e4e;border:2px solid #f4f4f4;"></div>
<div class="t" style="left:1186.8px;top:998.2px;font-size:16.2px;color:#f4f4f4;">30</div>
<div class="b" style="left:1284.4px;top:882.2px;width:133.6px;height:49.0px;background:#676665;border:2px solid #f4f4f4;"></div>
<div class="b" style="left:1284.4px;top:944.8px;width:133.6px;height:48.8px;background:#686868;border:2px solid #f4f4f4;"></div>
<div class="t" style="left:1342.6px;top:998.2px;font-size:16.2px;color:#f4f4f4;">40</div>
<div class="b" style="left:1440.2px;top:882.2px;width:133.6px;height:49.0px;background:#838281;border:2px solid #f4f4f4;"></div>
<div class="b" style="left:1440.2px;top:944.8px;width:133.6px;height:48.8px;background:#838383;border:2px solid #f4f4f4;"></div>
<div class="t" style="left:1498.4px;top:998.2px;font-size:16.2px;color:#f4f4f4;">50</div>
<div class="b" style="left:1596.0px;top:882.2px;width:133.6px;height:49.0px;background:#9e9e9c;border:2px solid #f4f4f4;"></div>
<div class="b" style="left:1596.0px;top:944.8px;width:133.6px;height:48.8px;background:#9d9d9d;border:2px solid #f4f4f4;"></div>
<div class="t" style="left:1654.2px;top:998.2px;font-size:16.2px;color:#f4f4f4;">60</div>
<div class="b" style="left:1751.8px;top:882.2px;width:133.6px;height:49.0px;background:#b7b6b4;border:2px solid #f4f4f4;"></div>
<div class="b" style="left:1751.8px;top:944.8px;width:133.6px;height:48.8px;background:#b6b6b6;border:2px solid #f4f4f4;"></div>
<div class="t" style="left:1810.0px;top:998.2px;font-size:16.2px;color:#f4f4f4;">70</div>
<div class="b" style="left:1907.6px;top:882.2px;width:133.6px;height:49.0px;background:#d0cecc;border:2px solid #f4f4f4;"></div>
<div class="b" style="left:1907.6px;top:944.8px;width:133.6px;height:48.8px;background:#cfcfcf;border:2px solid #f4f4f4;"></div>
<div class="t" style="left:1965.8px;top:998.2px;font-size:16.2px;color:#f4f4f4;">80</div>
<div class="b" style="left:2063.4px;top:882.2px;width:133.6px;height:49.0px;background:#e8e8e5;border:2px solid #f4f4f4;"></div>
<div class="b" style="left:2063.4px;top:944.8px;width:133.6px;height:48.8px;background:#e8e8e8;border:2px solid #f4f4f4;"></div>
<div class="t" style="left:2121.6px;top:998.2px;font-size:16.2px;color:#f4f4f4;">90</div>
<div class="b" style="left:2219.2px;top:882.2px;width:133.6px;height:49.0px;background:#fffffd;border:2px solid #f4f4f4;"></div>
<div class="b" style="left:2219.2px;top:944.8px;width:133.6px;height:48.8px;background:#ffffff;border:2px solid #f4f4f4;"></div>
<div class="t" style="left:2272.9px;top:998.2px;font-size:16.2px;color:#f4f4f4;">100</div>
<div class="t" style="left:645.9px;top:907.0px;font-size:16.8px;color:#f0f0f0;transform:translate(-50%,-50%) rotate(-90deg) scaleX(0.983);transform-origin:50% 50%;">Actual</div>
<div class="t" style="left:645.9px;top:968.8px;font-size:16.8px;color:#f0f0f0;transform:translate(-50%,-50%) rotate(-90deg) scaleX(0.983);transform-origin:50% 50%;">Target</div>
<div class="t" style="left:321.6px;top:1053.1px;font-size:38.6px;color:#f2f2f2;transform:scaleX(1.0401);">Current Reading</div>
<div class="t" style="left:320.6px;top:1114.8px;font-size:33.2px;color:#f2f2f2;transform:scaleX(1.0161);">x: 0.3156</div>
<div class="t" style="left:320.6px;top:1169.9px;font-size:33.2px;color:#f2f2f2;transform:scaleX(1.0161);">y: 0.3323</div>
<div class="t" style="left:321.2px;top:1225.2px;font-size:33.2px;color:#f2f2f2;transform:scaleX(1.0233);">fL: 110.723</div>
<div class="t" style="left:321.0px;top:1279.9px;font-size:33.2px;color:#f2f2f2;transform:scaleX(1.0548);">cd/m²: 379.364</div>
<div class="b" style="left:743.9px;top:1043.2px;width:395.8px;height:290.5px;background:#333;border:9px solid #e8e8e8;border-bottom-width:5.8px;"></div>
<div class="b" style="left:803.5px;top:1055.9px;width:323.4px;height:233.8px;overflow:hidden;"><div style="position:absolute;inset:0;background:linear-gradient(90deg,#a2c8fc 0%,#c2c8ff 22%,#e6c8ff 40%,#fcc4f8 52%,#ffb0e0 66%,#ff9cc6 84%,#ff92b8 100%)"></div><div style="position:absolute;inset:0;background:linear-gradient(90deg,#a4fcf6 0%,#c4fff8 22%,#f0ffff 42%,#ffffff 50%,#fff6e8 64%,#ffdcd0 82%,#ffc0b4 100%);-webkit-mask-image:linear-gradient(180deg,#000 0%,#000 50%,transparent 100%);mask-image:linear-gradient(180deg,#000 0%,#000 50%,transparent 100%)"></div><div style="position:absolute;inset:0;background:linear-gradient(90deg,#82fcc0 0%,#9cfcc6 20%,#c0fcc8 42%,#ecffc0 62%,#ffffc4 76%,#ffecb8 90%,#ffdcae 100%);-webkit-mask-image:linear-gradient(180deg,#000 0%,transparent 52%);mask-image:linear-gradient(180deg,#000 0%,transparent 52%)"></div></div>
<svg width="1160" height="1340" viewBox="0 0 1160 1340"><rect x="803.5" y="1055.9" width="323.4000000000001" height="233.79999999999995" fill="none" stroke="#8e8e8e" stroke-width="2"/><clipPath id="cpl"><rect x="804.5" y="1056.9" width="321.4000000000001" height="231.79999999999995"/></clipPath><path d="M842 1293 Q 975 1190.5 1130 1093.2" fill="none" stroke="#000" stroke-width="3.6" clip-path="url(#cpl)"/><rect x="954.6" y="1163.2" width="19.2" height="18.6" fill="#fff" stroke="#000" stroke-width="1.6"/><circle cx="966.1" cy="1160.5" r="5.4" fill="rgb(26,26,26)" stroke="#000" stroke-width="1.5"/><circle cx="979.7" cy="1158.6" r="5.4" fill="rgb(51,51,51)" stroke="#000" stroke-width="1.5"/><circle cx="975.8" cy="1162.8" r="5.4" fill="rgb(77,77,77)" stroke="#000" stroke-width="1.5"/><circle cx="977.7" cy="1164.2" r="5.4" fill="rgb(102,102,102)" stroke="#000" stroke-width="1.5"/><circle cx="979.7" cy="1160.5" r="5.4" fill="rgb(128,128,128)" stroke="#000" stroke-width="1.5"/><circle cx="979.7" cy="1160.0" r="5.4" fill="rgb(153,153,153)" stroke="#000" stroke-width="1.5"/><circle cx="979.7" cy="1160.0" r="5.4" fill="rgb(179,179,179)" stroke="#000" stroke-width="1.5"/><circle cx="981.0" cy="1159.5" r="5.4" fill="rgb(204,204,204)" stroke="#000" stroke-width="1.5"/><circle cx="981.6" cy="1159.1" r="5.4" fill="rgb(230,230,230)" stroke="#000" stroke-width="1.5"/><circle cx="983.5" cy="1156.3" r="5.4" fill="rgb(255,255,255)" stroke="#000" stroke-width="1.5"/><line x1="816.8" y1="1290.7" x2="816.8" y2="1297.7" stroke="#ddd" stroke-width="1.6"/><text x="816.8" y="1318.9" font-size="19.7" fill="#e4e4e4" text-anchor="middle">0.29</text><line x1="881.3" y1="1290.7" x2="881.3" y2="1297.7" stroke="#ddd" stroke-width="1.6"/><text x="881.3" y="1318.9" font-size="19.7" fill="#e4e4e4" text-anchor="middle">0.3</text><line x1="945.9" y1="1290.7" x2="945.9" y2="1297.7" stroke="#ddd" stroke-width="1.6"/><text x="945.9" y="1318.9" font-size="19.7" fill="#e4e4e4" text-anchor="middle">0.31</text><line x1="1010.5" y1="1290.7" x2="1010.5" y2="1297.7" stroke="#ddd" stroke-width="1.6"/><text x="1010.5" y="1318.9" font-size="19.7" fill="#e4e4e4" text-anchor="middle">0.32</text><line x1="1075.0" y1="1290.7" x2="1075.0" y2="1297.7" stroke="#ddd" stroke-width="1.6"/><text x="1075.0" y="1318.9" font-size="19.7" fill="#e4e4e4" text-anchor="middle">0.33</text><line x1="795.5" y1="1262.2" x2="802.5" y2="1262.2" stroke="#ddd" stroke-width="1.6"/><text x="795.0" y="1269.6" font-size="19.7" fill="#e4e4e4" text-anchor="end">0.31</text><line x1="795.5" y1="1215.5" x2="802.5" y2="1215.5" stroke="#ddd" stroke-width="1.6"/><text x="795.0" y="1222.9" font-size="19.7" fill="#e4e4e4" text-anchor="end">0.32</text><line x1="795.5" y1="1168.8" x2="802.5" y2="1168.8" stroke="#ddd" stroke-width="1.6"/><text x="795.0" y="1176.2" font-size="19.7" fill="#e4e4e4" text-anchor="end">0.33</text><line x1="795.5" y1="1122.1" x2="802.5" y2="1122.1" stroke="#ddd" stroke-width="1.6"/><text x="795.0" y="1129.5" font-size="19.7" fill="#e4e4e4" text-anchor="end">0.34</text><line x1="795.5" y1="1075.4" x2="802.5" y2="1075.4" stroke="#ddd" stroke-width="1.6"/><text x="795.0" y="1082.8" font-size="19.7" fill="#e4e4e4" text-anchor="end">0.35</text></svg>
<div class="b" style="left:1139.6px;top:1041.6px;width:1410.6px;height:296.6px;background:#3a3a3a;border:2.2px solid #1e1e1e;border-bottom:none;"></div>
<div class="b" style="left:1141.6px;top:1044.2px;width:1384.6px;height:38.5px;background:linear-gradient(#2b2b2b 0%,#343434 49%,#1d1d1d 51%,#101010 100%);"></div>
<div class="b" style="left:1141.6px;top:1082.7px;width:1384.6px;height:232.3px;overflow:hidden;"><div class="b" style="left:0;top:0.0px;width:100%;height:35.4px;background:linear-gradient(#474747,#414141 30%,#414141);"></div><div class="b" style="left:0;top:34.9px;width:100%;height:35.4px;background:linear-gradient(#878787,#818181 30%,#818181);"></div><div class="b" style="left:0;top:69.7px;width:100%;height:35.4px;background:linear-gradient(#474747,#414141 30%,#414141);"></div><div class="b" style="left:0;top:104.6px;width:100%;height:35.4px;background:linear-gradient(#878787,#818181 30%,#818181);"></div><div class="b" style="left:0;top:139.4px;width:100%;height:35.4px;background:linear-gradient(#474747,#414141 30%,#414141);"></div><div class="b" style="left:0;top:174.2px;width:100%;height:35.4px;background:linear-gradient(#878787,#818181 30%,#818181);"></div><div class="b" style="left:0;top:209.1px;width:100%;height:35.4px;background:linear-gradient(#474747,#414141 30%,#414141);"></div></div>
<div class="b" style="left:1141.6px;top:1044.5px;width:1384.6px;height:270.5px;overflow:hidden;">
<div class="t" style="left:256.0px;top:9.7px;font-size:20.8px;color:#f4f4f4;transform:scaleX(0.9615);">0</div>
<div class="t" style="left:361.7px;top:9.7px;font-size:20.8px;color:#f4f4f4;transform:scaleX(0.9615);">10</div>
<div class="t" style="left:472.9px;top:9.7px;font-size:20.8px;color:#f4f4f4;transform:scaleX(0.9615);">20</div>
<div class="t" style="left:584.1px;top:9.7px;font-size:20.8px;color:#f4f4f4;transform:scaleX(0.9615);">30</div>
<div class="t" style="left:695.3px;top:9.7px;font-size:20.8px;color:#f4f4f4;transform:scaleX(0.9615);">40</div>
<div class="t" style="left:806.5px;top:9.7px;font-size:20.8px;color:#f4f4f4;transform:scaleX(0.9615);">50</div>
<div class="t" style="left:917.7px;top:9.7px;font-size:20.8px;color:#f4f4f4;transform:scaleX(0.9615);">60</div>
<div class="t" style="left:1028.9px;top:9.7px;font-size:20.8px;color:#f4f4f4;transform:scaleX(0.9615);">70</div>
<div class="t" style="left:1140.1px;top:9.7px;font-size:20.8px;color:#f4f4f4;transform:scaleX(0.9615);">80</div>
<div class="t" style="left:1251.3px;top:9.7px;font-size:20.8px;color:#f4f4f4;transform:scaleX(0.9615);">90</div>
<div class="t" style="left:16.9px;top:45.4px;font-size:21.0px;color:#f4f4f4;font-weight:bold;transform:scaleX(0.9786);">x: CIE31</div>
<div class="t" style="left:211.9px;top:45.9px;font-size:20.4px;color:#f4f4f4;transform:scaleX(1.0172);">0.0000</div>
<div class="t" style="left:323.1px;top:45.9px;font-size:20.4px;color:#f4f4f4;transform:scaleX(1.0172);">0.3129</div>
<div class="t" style="left:434.3px;top:45.9px;font-size:20.4px;color:#f4f4f4;transform:scaleX(1.0172);">0.3150</div>
<div class="t" style="left:545.5px;top:45.9px;font-size:20.4px;color:#f4f4f4;transform:scaleX(1.0172);">0.3144</div>
<div class="t" style="left:656.7px;top:45.9px;font-size:20.4px;color:#f4f4f4;transform:scaleX(1.0172);">0.3147</div>
<div class="t" style="left:767.9px;top:45.9px;font-size:20.4px;color:#f4f4f4;transform:scaleX(1.0172);">0.3150</div>
<div class="t" style="left:879.1px;top:45.9px;font-size:20.4px;color:#f4f4f4;transform:scaleX(1.0172);">0.3150</div>
<div class="t" style="left:990.3px;top:45.9px;font-size:20.4px;color:#f4f4f4;transform:scaleX(1.0172);">0.3150</div>
<div class="t" style="left:1101.5px;top:45.9px;font-size:20.4px;color:#f4f4f4;transform:scaleX(1.0172);">0.3152</div>
<div class="t" style="left:1212.7px;top:45.9px;font-size:20.4px;color:#f4f4f4;transform:scaleX(1.0172);">0.3153</div>
<div class="t" style="left:1323.9px;top:45.9px;font-size:20.4px;color:#f4f4f4;transform:scaleX(1.0172);">0.3156</div>
<div class="t" style="left:16.9px;top:80.3px;font-size:21.0px;color:#f4f4f4;font-weight:bold;transform:scaleX(0.9786);">y: CIE31</div>
<div class="t" style="left:211.9px;top:80.8px;font-size:20.4px;color:#f4f4f4;transform:scaleX(1.0172);">1.0000</div>
<div class="t" style="left:323.1px;top:80.8px;font-size:20.4px;color:#f4f4f4;transform:scaleX(1.0172);">0.3314</div>
<div class="t" style="left:434.3px;top:80.8px;font-size:20.4px;color:#f4f4f4;transform:scaleX(1.0172);">0.3318</div>
<div class="t" style="left:545.5px;top:80.8px;font-size:20.4px;color:#f4f4f4;transform:scaleX(1.0172);">0.3309</div>
<div class="t" style="left:656.7px;top:80.8px;font-size:20.4px;color:#f4f4f4;transform:scaleX(1.0172);">0.3306</div>
<div class="t" style="left:767.9px;top:80.8px;font-size:20.4px;color:#f4f4f4;transform:scaleX(1.0172);">0.3314</div>
<div class="t" style="left:879.1px;top:80.8px;font-size:20.4px;color:#f4f4f4;transform:scaleX(1.0172);">0.3315</div>
<div class="t" style="left:990.3px;top:80.8px;font-size:20.4px;color:#f4f4f4;transform:scaleX(1.0172);">0.3315</div>
<div class="t" style="left:1101.5px;top:80.8px;font-size:20.4px;color:#f4f4f4;transform:scaleX(1.0172);">0.3316</div>
<div class="t" style="left:1212.7px;top:80.8px;font-size:20.4px;color:#f4f4f4;transform:scaleX(1.0172);">0.3317</div>
<div class="t" style="left:1323.9px;top:80.8px;font-size:20.4px;color:#f4f4f4;transform:scaleX(1.0172);">0.3323</div>
<div class="t" style="left:16.9px;top:115.1px;font-size:21.0px;color:#f4f4f4;font-weight:bold;transform:scaleX(0.9710);">Y</div>
<div class="t" style="left:211.9px;top:115.6px;font-size:20.4px;color:#f4f4f4;transform:scaleX(1.0172);">0.0097</div>
<div class="t" style="left:323.1px;top:115.6px;font-size:20.4px;color:#f4f4f4;transform:scaleX(1.0172);">2.3661</div>
<div class="t" style="left:434.3px;top:115.6px;font-size:20.4px;color:#f4f4f4;transform:scaleX(1.0172);">10.4647</div>
<div class="t" style="left:545.5px;top:115.6px;font-size:20.4px;color:#f4f4f4;transform:scaleX(1.0172);">25.7979</div>
<div class="t" style="left:656.7px;top:115.6px;font-size:20.4px;color:#f4f4f4;transform:scaleX(1.0172);">49.4157</div>
<div class="t" style="left:767.9px;top:115.6px;font-size:20.4px;color:#f4f4f4;transform:scaleX(1.0172);">82.2929</div>
<div class="t" style="left:879.1px;top:115.6px;font-size:20.4px;color:#f4f4f4;transform:scaleX(1.0172);">121.9670</div>
<div class="t" style="left:990.3px;top:115.6px;font-size:20.4px;color:#f4f4f4;transform:scaleX(1.0172);">171.1813</div>
<div class="t" style="left:1101.5px;top:115.6px;font-size:20.4px;color:#f4f4f4;transform:scaleX(1.0172);">231.8679</div>
<div class="t" style="left:1212.7px;top:115.6px;font-size:20.4px;color:#f4f4f4;transform:scaleX(1.0172);">302.4882</div>
<div class="t" style="left:1323.9px;top:115.6px;font-size:20.4px;color:#f4f4f4;transform:scaleX(1.0172);">379.3640</div>
<div class="t" style="left:16.9px;top:150.0px;font-size:21.0px;color:#f4f4f4;font-weight:bold;transform:scaleX(1.0370);">Target Y</div>
<div class="t" style="left:211.9px;top:150.5px;font-size:20.4px;color:#f4f4f4;transform:scaleX(1.0172);">0.0000</div>
<div class="t" style="left:323.1px;top:150.5px;font-size:20.4px;color:#f4f4f4;transform:scaleX(1.0172);">3.9188</div>
<div class="t" style="left:434.3px;top:150.5px;font-size:20.4px;color:#f4f4f4;transform:scaleX(1.0172);">12.5588</div>
<div class="t" style="left:545.5px;top:150.5px;font-size:20.4px;color:#f4f4f4;transform:scaleX(1.0172);">27.4174</div>
<div class="t" style="left:656.7px;top:150.5px;font-size:20.4px;color:#f4f4f4;transform:scaleX(1.0172);">50.4055</div>
<div class="t" style="left:767.9px;top:150.5px;font-size:20.4px;color:#f4f4f4;transform:scaleX(1.0172);">81.8898</div>
<div class="t" style="left:879.1px;top:150.5px;font-size:20.4px;color:#f4f4f4;transform:scaleX(1.0172);">120.8453</div>
<div class="t" style="left:990.3px;top:150.5px;font-size:20.4px;color:#f4f4f4;transform:scaleX(1.0172);">168.8934</div>
<div class="t" style="left:1101.5px;top:150.5px;font-size:20.4px;color:#f4f4f4;transform:scaleX(1.0172);">229.0705</div>
<div class="t" style="left:1212.7px;top:150.5px;font-size:20.4px;color:#f4f4f4;transform:scaleX(1.0172);">300.1902</div>
<div class="t" style="left:1323.9px;top:150.5px;font-size:20.4px;color:#f4f4f4;transform:scaleX(1.0172);">379.3640</div>
<div class="t" style="left:16.9px;top:184.8px;font-size:21.0px;color:#f4f4f4;font-weight:bold;transform:scaleX(1.0400);">Gamma Log/Log</div>
<div class="t" style="left:211.9px;top:185.3px;font-size:20.4px;color:#f4f4f4;transform:scaleX(1.0172);">1.2778</div>
<div class="t" style="left:323.1px;top:185.3px;font-size:20.4px;color:#f4f4f4;transform:scaleX(1.0172);">2.2238</div>
<div class="t" style="left:434.3px;top:185.3px;font-size:20.4px;color:#f4f4f4;transform:scaleX(1.0172);">2.2309</div>
<div class="t" style="left:545.5px;top:185.3px;font-size:20.4px;color:#f4f4f4;transform:scaleX(1.0172);">2.2207</div>
<div class="t" style="left:656.7px;top:185.3px;font-size:20.4px;color:#f4f4f4;transform:scaleX(1.0172);">2.2244</div>
<div class="t" style="left:767.9px;top:185.3px;font-size:20.4px;color:#f4f4f4;transform:scaleX(1.0172);">2.2173</div>
<div class="t" style="left:879.1px;top:185.3px;font-size:20.4px;color:#f4f4f4;transform:scaleX(1.0172);">2.2214</div>
<div class="t" style="left:990.3px;top:185.3px;font-size:20.4px;color:#f4f4f4;transform:scaleX(1.0172);">2.2137</div>
<div class="t" style="left:1101.5px;top:185.3px;font-size:20.4px;color:#f4f4f4;transform:scaleX(1.0172);">2.2063</div>
<div class="t" style="left:1212.7px;top:185.3px;font-size:20.4px;color:#f4f4f4;transform:scaleX(1.0172);">2.1947</div>
<div class="t" style="left:1323.9px;top:185.3px;font-size:20.4px;color:#f4f4f4;transform:scaleX(1.0172);">2.2749</div>
<div class="t" style="left:16.9px;top:219.7px;font-size:21.0px;color:#f4f4f4;font-weight:bold;transform:scaleX(0.9190);">CCT</div>
<div class="t" style="left:211.9px;top:220.2px;font-size:20.4px;color:#f4f4f4;transform:scaleX(1.0172);">8931.0000</div>
<div class="t" style="left:323.1px;top:220.2px;font-size:20.4px;color:#f4f4f4;transform:scaleX(1.0172);">6475.0000</div>
<div class="t" style="left:434.3px;top:220.2px;font-size:20.4px;color:#f4f4f4;transform:scaleX(1.0172);">6362.0000</div>
<div class="t" style="left:545.5px;top:220.2px;font-size:20.4px;color:#f4f4f4;transform:scaleX(1.0172);">6400.0000</div>
<div class="t" style="left:656.7px;top:220.2px;font-size:20.4px;color:#f4f4f4;transform:scaleX(1.0172);">6387.0000</div>
<div class="t" style="left:767.9px;top:220.2px;font-size:20.4px;color:#f4f4f4;transform:scaleX(1.0172);">6365.0000</div>
<div class="t" style="left:879.1px;top:220.2px;font-size:20.4px;color:#f4f4f4;transform:scaleX(1.0172);">6365.0000</div>
<div class="t" style="left:990.3px;top:220.2px;font-size:20.4px;color:#f4f4f4;transform:scaleX(1.0172);">6364.0000</div>
<div class="t" style="left:1101.5px;top:220.2px;font-size:20.4px;color:#f4f4f4;transform:scaleX(1.0172);">6355.0000</div>
<div class="t" style="left:1212.7px;top:220.2px;font-size:20.4px;color:#f4f4f4;transform:scaleX(1.0172);">6345.0000</div>
<div class="t" style="left:1323.9px;top:220.2px;font-size:20.4px;color:#f4f4f4;transform:scaleX(1.0172);">6327.0000</div>
<div class="t" style="left:16.9px;top:254.5px;font-size:21.0px;color:#f4f4f4;font-weight:bold;transform:scaleX(1.0282);">ΔE 2000</div>
<div class="t" style="left:211.9px;top:255.0px;font-size:20.4px;color:#f4f4f4;transform:scaleX(1.0172);">0.1540</div>
<div class="t" style="left:323.1px;top:255.0px;font-size:20.4px;color:#f4f4f4;transform:scaleX(1.0172);">2.2367</div>
<div class="t" style="left:434.3px;top:255.0px;font-size:20.4px;color:#f4f4f4;transform:scaleX(1.0172);">1.5898</div>
<div class="t" style="left:545.5px;top:255.0px;font-size:20.4px;color:#f4f4f4;transform:scaleX(1.0172);">0.8739</div>
<div class="t" style="left:656.7px;top:255.0px;font-size:20.4px;color:#f4f4f4;transform:scaleX(1.0172);">0.6357</div>
<div class="t" style="left:767.9px;top:255.0px;font-size:20.4px;color:#f4f4f4;transform:scaleX(1.0172);">0.8003</div>
<div class="t" style="left:879.1px;top:255.0px;font-size:20.4px;color:#f4f4f4;transform:scaleX(1.0172);">0.9595</div>
<div class="t" style="left:990.3px;top:255.0px;font-size:20.4px;color:#f4f4f4;transform:scaleX(1.0172);">1.0857</div>
<div class="t" style="left:1101.5px;top:255.0px;font-size:20.4px;color:#f4f4f4;transform:scaleX(1.0172);">1.2249</div>
<div class="t" style="left:1212.7px;top:255.0px;font-size:20.4px;color:#f4f4f4;transform:scaleX(1.0172);">1.3878</div>
<div class="t" style="left:1323.9px;top:255.0px;font-size:20.4px;color:#f4f4f4;transform:scaleX(1.0172);">1.7371</div>
</div>
<div class="b" style="left:1141.6px;top:1315.6px;width:1384.6px;height:21.5px;background:#5a5a5a;border-radius:0 0 5px 5px;"></div>
<div class="b" style="left:1165.5px;top:1318.0px;width:1218.0px;height:17.0px;background:#434343;border-radius:8.5px;"></div>
<div class="b" style="left:1142.6px;top:1316.6px;width:19.6px;height:19.6px;background:#707070;border-radius:4px;border:1px solid #7c7c7c;"></div>
<div class="b" style="left:2505.6px;top:1316.6px;width:19.0px;height:19.6px;background:#707070;border-radius:4px;border:1px solid #7c7c7c;"></div>
<div class="b" style="left:2526.6px;top:1082.8px;width:20.6px;height:231.7px;background:#5a5a5a;border-radius:0 5px 5px 0;"></div>
<div class="b" style="left:2528.7px;top:1106.5px;width:16.8px;height:157.4px;background:#404040;border-radius:8.4px;"></div>
<div class="b" style="left:2527.6px;top:1083.8px;width:18.6px;height:18.6px;background:#707070;border-radius:4px;border:1px solid #808080;"></div>
<div class="b" style="left:2527.6px;top:1295.2px;width:18.6px;height:18.6px;background:#707070;border-radius:4px;border:1px solid #808080;"></div>
<svg width="2560" height="1340" viewBox="0 0 2560 1340"><g fill="#3c3c3c"><path d="M1156.5 1320.5 v12 l-8 -6z"/><path d="M2511.5 1320.5 v12 l8 -6z"/><path d="M2530.6 1096.5 h12.6 l-6.3 -7z"/><path d="M2530.6 1301 h12.6 l-6.3 7z"/></g></svg>
<div class="b" style="left:301.0px;top:1435.9px;width:158.5px;height:91.4px;background:linear-gradient(#9c9c9c 0%,#898989 45%,#6e6e6e 80%,#606060 100%);border-radius:8px 8px 6px 6px;border:1px solid #a8a8a8;border-bottom:none;"></div>
<div class="b" style="left:309.0px;top:1443.3px;width:143.3px;height:53.7px;background:rgb(0,0,0);border-radius:6px;box-shadow:inset 0 2.2px 1.5px rgba(0,0,0,.42), inset 1px 0 1px rgba(0,0,0,.15), inset -1px 0 1px rgba(0,0,0,.15), 0 1px 0 rgba(255,255,255,.2);"></div>
<div class="t" style="left:376.1px;top:1506.8px;font-size:15.0px;color:#262626;font-weight:bold;">0</div>
<div class="b" style="left:462.3px;top:1435.9px;width:158.5px;height:91.4px;background:linear-gradient(#9c9c9c 0%,#898989 45%,#6e6e6e 80%,#606060 100%);border-radius:8px 8px 6px 6px;border:1px solid #a8a8a8;border-bottom:none;"></div>
<div class="b" style="left:470.3px;top:1443.3px;width:143.3px;height:53.7px;background:rgb(26,26,26);border-radius:6px;box-shadow:inset 0 2.2px 1.5px rgba(0,0,0,.42), inset 1px 0 1px rgba(0,0,0,.15), inset -1px 0 1px rgba(0,0,0,.15), 0 1px 0 rgba(255,255,255,.2);"></div>
<div class="t" style="left:533.2px;top:1506.8px;font-size:15.0px;color:#262626;font-weight:bold;">10</div>
<div class="b" style="left:623.5px;top:1435.9px;width:158.5px;height:91.4px;background:linear-gradient(#9c9c9c 0%,#898989 45%,#6e6e6e 80%,#606060 100%);border-radius:8px 8px 6px 6px;border:1px solid #a8a8a8;border-bottom:none;"></div>
<div class="b" style="left:631.5px;top:1443.3px;width:143.3px;height:53.7px;background:rgb(51,51,51);border-radius:6px;box-shadow:inset 0 2.2px 1.5px rgba(0,0,0,.42), inset 1px 0 1px rgba(0,0,0,.15), inset -1px 0 1px rgba(0,0,0,.15), 0 1px 0 rgba(255,255,255,.2);"></div>
<div class="t" style="left:694.5px;top:1506.8px;font-size:15.0px;color:#262626;font-weight:bold;">20</div>
<div class="b" style="left:784.8px;top:1435.9px;width:158.5px;height:91.4px;background:linear-gradient(#9c9c9c 0%,#898989 45%,#6e6e6e 80%,#606060 100%);border-radius:8px 8px 6px 6px;border:1px solid #a8a8a8;border-bottom:none;"></div>
<div class="b" style="left:792.8px;top:1443.3px;width:143.3px;height:53.7px;background:rgb(77,77,77);border-radius:6px;box-shadow:inset 0 2.2px 1.5px rgba(0,0,0,.42), inset 1px 0 1px rgba(0,0,0,.15), inset -1px 0 1px rgba(0,0,0,.15), 0 1px 0 rgba(255,255,255,.2);"></div>
<div class="t" style="left:855.8px;top:1506.8px;font-size:15.0px;color:#262626;font-weight:bold;">30</div>
<div class="b" style="left:946.1px;top:1435.9px;width:158.5px;height:91.4px;background:linear-gradient(#9c9c9c 0%,#898989 45%,#6e6e6e 80%,#606060 100%);border-radius:8px 8px 6px 6px;border:1px solid #a8a8a8;border-bottom:none;"></div>
<div class="b" style="left:954.1px;top:1443.3px;width:143.3px;height:53.7px;background:rgb(102,102,102);border-radius:6px;box-shadow:inset 0 2.2px 1.5px rgba(0,0,0,.42), inset 1px 0 1px rgba(0,0,0,.15), inset -1px 0 1px rgba(0,0,0,.15), 0 1px 0 rgba(255,255,255,.2);"></div>
<div class="t" style="left:1017.0px;top:1506.8px;font-size:15.0px;color:#262626;font-weight:bold;">40</div>
<div class="b" style="left:1107.3px;top:1435.9px;width:158.5px;height:91.4px;background:linear-gradient(#9c9c9c 0%,#898989 45%,#6e6e6e 80%,#606060 100%);border-radius:8px 8px 6px 6px;border:1px solid #a8a8a8;border-bottom:none;"></div>
<div class="b" style="left:1115.3px;top:1443.3px;width:143.3px;height:53.7px;background:rgb(128,128,128);border-radius:6px;box-shadow:inset 0 2.2px 1.5px rgba(0,0,0,.42), inset 1px 0 1px rgba(0,0,0,.15), inset -1px 0 1px rgba(0,0,0,.15), 0 1px 0 rgba(255,255,255,.2);"></div>
<div class="t" style="left:1178.3px;top:1506.8px;font-size:15.0px;color:#262626;font-weight:bold;">50</div>
<div class="b" style="left:1268.6px;top:1435.9px;width:158.5px;height:91.4px;background:linear-gradient(#9c9c9c 0%,#898989 45%,#6e6e6e 80%,#606060 100%);border-radius:8px 8px 6px 6px;border:1px solid #a8a8a8;border-bottom:none;"></div>
<div class="b" style="left:1276.6px;top:1443.3px;width:143.3px;height:53.7px;background:rgb(153,153,153);border-radius:6px;box-shadow:inset 0 2.2px 1.5px rgba(0,0,0,.42), inset 1px 0 1px rgba(0,0,0,.15), inset -1px 0 1px rgba(0,0,0,.15), 0 1px 0 rgba(255,255,255,.2);"></div>
<div class="t" style="left:1339.6px;top:1506.8px;font-size:15.0px;color:#262626;font-weight:bold;">60</div>
<div class="b" style="left:1429.9px;top:1435.9px;width:158.5px;height:91.4px;background:linear-gradient(#9c9c9c 0%,#898989 45%,#6e6e6e 80%,#606060 100%);border-radius:8px 8px 6px 6px;border:1px solid #a8a8a8;border-bottom:none;"></div>
<div class="b" style="left:1437.9px;top:1443.3px;width:143.3px;height:53.7px;background:rgb(179,179,179);border-radius:6px;box-shadow:inset 0 2.2px 1.5px rgba(0,0,0,.42), inset 1px 0 1px rgba(0,0,0,.15), inset -1px 0 1px rgba(0,0,0,.15), 0 1px 0 rgba(255,255,255,.2);"></div>
<div class="t" style="left:1500.8px;top:1506.8px;font-size:15.0px;color:#262626;font-weight:bold;">70</div>
<div class="b" style="left:1591.2px;top:1435.9px;width:158.5px;height:91.4px;background:linear-gradient(#9c9c9c 0%,#898989 45%,#6e6e6e 80%,#606060 100%);border-radius:8px 8px 6px 6px;border:1px solid #a8a8a8;border-bottom:none;"></div>
<div class="b" style="left:1599.2px;top:1443.3px;width:143.3px;height:53.7px;background:rgb(204,204,204);border-radius:6px;box-shadow:inset 0 2.2px 1.5px rgba(0,0,0,.42), inset 1px 0 1px rgba(0,0,0,.15), inset -1px 0 1px rgba(0,0,0,.15), 0 1px 0 rgba(255,255,255,.2);"></div>
<div class="t" style="left:1662.1px;top:1506.8px;font-size:15.0px;color:#262626;font-weight:bold;">80</div>
<div class="b" style="left:1752.4px;top:1435.9px;width:158.5px;height:91.4px;background:linear-gradient(#9c9c9c 0%,#898989 45%,#6e6e6e 80%,#606060 100%);border-radius:8px 8px 6px 6px;border:1px solid #a8a8a8;border-bottom:none;"></div>
<div class="b" style="left:1760.4px;top:1443.3px;width:143.3px;height:53.7px;background:rgb(230,230,230);border-radius:6px;box-shadow:inset 0 2.2px 1.5px rgba(0,0,0,.42), inset 1px 0 1px rgba(0,0,0,.15), inset -1px 0 1px rgba(0,0,0,.15), 0 1px 0 rgba(255,255,255,.2);"></div>
<div class="t" style="left:1823.4px;top:1506.8px;font-size:15.0px;color:#262626;font-weight:bold;">90</div>
<div class="b" style="left:1913.7px;top:1435.9px;width:158.5px;height:91.4px;background:linear-gradient(#1c1c1c,#2c2c2c 60%,#343434);border-radius:8px 8px 6px 6px;"></div>
<div class="b" style="left:1920.9px;top:1442.7px;width:143.7px;height:54.3px;background:#fff;border-radius:6px;"></div>
<div class="t" style="left:1980.5px;top:1506.8px;font-size:15.0px;color:#fff;font-weight:bold;">100</div>
<div class="b" style="left:2076.0px;top:1435.6px;width:72.5px;height:28.0px;background:linear-gradient(#a0a0a0 0%,#8c8c8c 45%,#6c6c6c 100%);border-radius:7px 7px 0 0;border:1px solid #a8a8a8;border-bottom:1px solid #555;"></div>
<div class="b" style="left:2076.0px;top:1464.6px;width:72.5px;height:64.0px;background:linear-gradient(#a0a0a0 0%,#8c8c8c 45%,#6c6c6c 100%);border:1px solid #a8a8a8;border-top:1px solid #aaa;"></div>
<div class="b" style="left:2149.5px;top:1435.0px;width:68.6px;height:46.0px;background:linear-gradient(#a0a0a0 0%,#8c8c8c 45%,#6c6c6c 100%);border:1px solid #a8a8a8;border-right:1px solid #555;border-bottom:1px solid #555;border-radius:7px 0 0 0;"></div>
<div class="b" style="left:2218.3px;top:1435.0px;width:68.6px;height:46.0px;background:linear-gradient(#a0a0a0 0%,#8c8c8c 45%,#6c6c6c 100%);border:1px solid #a8a8a8;border-right:1px solid #555;border-bottom:1px solid #555;"></div>
<div class="b" style="left:2285.9px;top:1435.0px;width:68.6px;height:46.0px;background:linear-gradient(#a0a0a0 0%,#8c8c8c 45%,#6c6c6c 100%);border:1px solid #a8a8a8;border-right:1px solid #555;border-bottom:1px solid #555;"></div>
<div class="b" style="left:2353.5px;top:1435.0px;width:68.6px;height:46.0px;background:linear-gradient(#a0a0a0 0%,#8c8c8c 45%,#6c6c6c 100%);border:1px solid #a8a8a8;border-right:1px solid #555;border-bottom:1px solid #555;"></div>
<div class="b" style="left:2421.1px;top:1435.0px;width:68.6px;height:46.0px;background:linear-gradient(#a0a0a0 0%,#8c8c8c 45%,#6c6c6c 100%);border:1px solid #a8a8a8;border-right:1px solid #555;border-bottom:1px solid #555;"></div>
<div class="b" style="left:2488.7px;top:1435.0px;width:80.0px;height:46.0px;background:linear-gradient(#a0a0a0 0%,#8c8c8c 45%,#6c6c6c 100%);border:1px solid #a8a8a8;border-right:1px solid #555;border-bottom:1px solid #555;"></div>
<div class="b" style="left:2149.5px;top:1482.0px;width:204.5px;height:47.0px;background:linear-gradient(#a0a0a0 0%,#8c8c8c 45%,#6c6c6c 100%);border:1px solid #a8a8a8;border-right:1px solid #555;"></div>
<div class="b" style="left:2354.0px;top:1482.0px;width:207.0px;height:47.0px;background:linear-gradient(#a0a0a0 0%,#8c8c8c 45%,#6c6c6c 100%);border:1px solid #a8a8a8;"></div>
<svg width="2560" height="100" viewBox="0 1430 2560 100" style="top:1430px"><defs><linearGradient id="bd" x1="0" y1="0" x2="0" y2="1"><stop offset="0" stop-color="#6c6c6c"/><stop offset="1" stop-color="#9c9c9c"/></linearGradient></defs><circle cx="2112" cy="1449" r="11" fill="url(#bd)"/><path d="M2105 1452 h14 l-7 -7.5z" fill="#333"/><rect x="2091" y="1474" width="42" height="43" rx="6" fill="#8c8c8c" stroke="#262626" stroke-width="3.4"/><rect x="2101.5" y="1485" width="21" height="21" fill="#000"/><circle cx="2184.4" cy="1458" r="14.5" fill="url(#bd)"/><circle cx="2252.0" cy="1458" r="14.5" fill="url(#bd)"/><circle cx="2319.6" cy="1458" r="14.5" fill="url(#bd)"/><circle cx="2387.2" cy="1458" r="14.5" fill="url(#bd)"/><circle cx="2454.8" cy="1458" r="14.5" fill="url(#bd)"/><circle cx="2522.4" cy="1458" r="14.5" fill="url(#bd)"/><rect x="2177.9" y="1451.5" width="13" height="13" fill="#333"/><path d="M2247.0 1450.5 v15 l12 -7.5z" fill="#333"/><path d="M2314.6 1451.5 h-3 v13 h3 M2324.6 1451.5 h3 v13 h-3" fill="none" stroke="#333" stroke-width="2"/><path d="M2315.6 1458 h8" stroke="#333" stroke-width="2" stroke-dasharray="2 1"/><text x="2387.2" y="1465" font-size="24" font-weight="bold" fill="#333" text-anchor="middle">∞</text><path d="M2447.8 1457 a7 7 0 0 1 12 -4" fill="none" stroke="#333" stroke-width="3"/><path d="M2462.3 1448.5 v7 h-7z" fill="#333"/><path d="M2461.8 1459 a7 7 0 0 1 -12 4" fill="none" stroke="#333" stroke-width="3"/><path d="M2447.3 1467.5 v-7 h7z" fill="#333"/><circle cx="2196" cy="1505" r="14.5" fill="url(#bd)"/><circle cx="2516" cy="1505" r="14.5" fill="url(#bd)"/><path d="M2194.5 1498.5 l-5 6.5 l5 6.5 M2201.5 1498.5 l-5 6.5 l5 6.5" fill="none" stroke="#333" stroke-width="2.2"/><path d="M2510.5 1498.5 l5 6.5 l-5 6.5 M2517.5 1498.5 l5 6.5 l-5 6.5" fill="none" stroke="#333" stroke-width="2.2"/></svg>
<div class="t" style="left:2236.5px;top:1489.0px;font-size:32.6px;color:#3a3a3a;font-weight:bold;transform:scaleX(0.9598);text-shadow:0 1px 0 rgba(255,255,255,.22);">Back</div>
<div class="t" style="left:2396.8px;top:1489.0px;font-size:32.6px;color:#3a3a3a;font-weight:bold;transform:scaleX(1.0798);text-shadow:0 1px 0 rgba(255,255,255,.22);">Next</div>
<div class="b" style="left:298.0px;top:140.0px;width:2.3px;height:1388.0px;background:#474747;"></div>
</body></html>
